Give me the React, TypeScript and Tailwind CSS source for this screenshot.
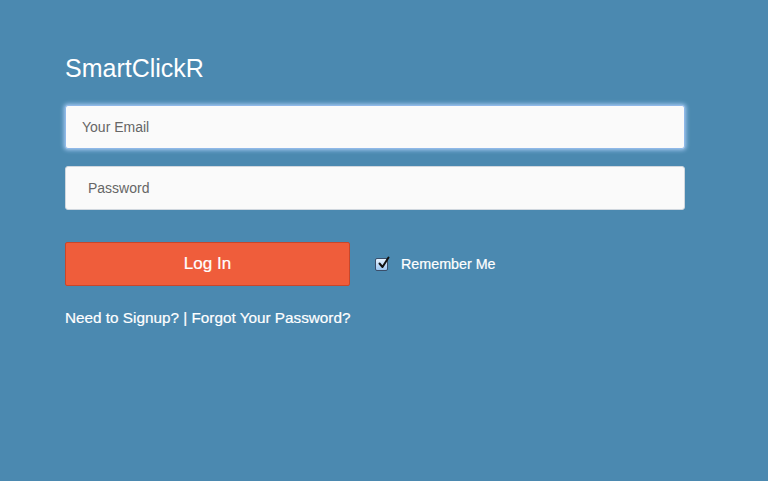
export default function App() {
  return (
    <div className="min-h-[481px] w-full bg-[#4b89b0] font-['Liberation_Sans',Arial,sans-serif] text-white">
      <div className="w-[620px] pl-[65px] pt-[52px] box-content">
        <h1 className="text-[25px] font-light leading-[32px]">SmartClickR</h1>

        <div className="mt-[21px] flex flex-col gap-[17px]">
          <input
            type="email"
            placeholder="Your Email"
            className="h-[44px] w-[620px] rounded-[3px] border border-[#8fb8e8] bg-[#fafafa] px-[16px] text-[14px] text-[#555] shadow-[0_0_4px_1px_#a9cdf5] outline-none placeholder:text-[#666]"
          />
          <input
            type="password"
            placeholder="Password"
            className="h-[44px] w-[620px] rounded-[3px] border border-[#d0d7de] bg-[#fafafa] px-[22px] text-[14px] text-[#555] outline-none placeholder:text-[#666]"
          />
        </div>

        <div className="mt-[32px] flex items-center [-webkit-text-stroke:0.2px_white]">
          <button className="h-[44px] w-[285px] rounded-[2px] border border-[#c9462a] bg-[#ef5d3b] text-[17px] text-white">
            Log In
          </button>
          <label className="ml-[25px] flex items-center gap-[13px] pt-[2px] text-[14.3px]">
            <span className="relative -mt-[2px] flex h-[13px] w-[13px] items-center justify-center rounded-[2px] border border-[#3a4e6a] bg-gradient-to-b from-[#e8f3ff] to-[#9cc6f2]">
              <svg viewBox="0 0 14 14" className="absolute -top-[3px] left-[1px] h-[14px] w-[14px]">
                <path d="M2.5 7.5 L5.5 11 L11.5 1.5" fill="none" stroke="#111" strokeWidth="2" strokeLinecap="round" strokeLinejoin="round" />
              </svg>
            </span>
            Remember Me
          </label>
        </div>

        <p className="mt-[21px] text-[15.3px] leading-[22px] [-webkit-text-stroke:0.2px_white]">
          <a href="#">Need to Signup?</a> | <a href="#">Forgot Your Password?</a>
        </p>
      </div>
    </div>
  );
}
